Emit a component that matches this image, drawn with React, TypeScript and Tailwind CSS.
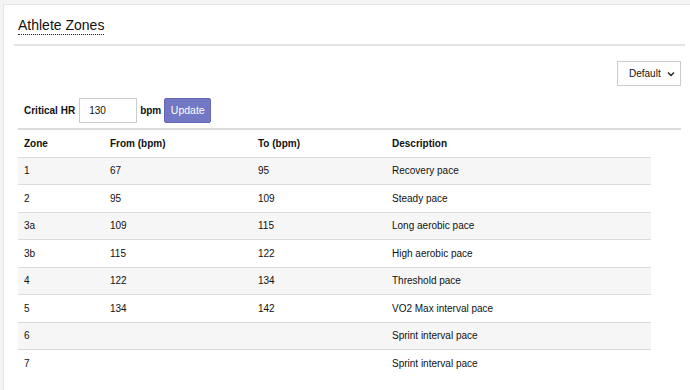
import React from "react";

const rows = [
  ["1", "67", "95", "Recovery pace"],
  ["2", "95", "109", "Steady pace"],
  ["3a", "109", "115", "Long aerobic pace"],
  ["3b", "115", "122", "High aerobic pace"],
  ["4", "122", "134", "Threshold pace"],
  ["5", "134", "142", "VO2 Max interval pace"],
  ["6", "", "", "Sprint interval pace"],
  ["7", "", "", "Sprint interval pace"],
];

export default function App() {
  return (
    <div
      className="w-[690px] h-[390px] overflow-hidden bg-[#f4f4f5] pt-[4px] pl-[3px]"
      style={{ fontFamily: '"Liberation Sans", Arial, sans-serif' }}
    >
      <div className="h-full bg-white border-l border-t border-[#e4e4e7] text-[#111]">
        <div className="pl-[10px] pr-[5px]">
          <div className="border-b-2 border-[#e3e5e8] pt-[8px] pb-[7px] pl-[4px]">
            <span className="text-[14px] leading-[18px] border-b border-dotted border-[#222] inline-block">
              Athlete Zones
            </span>
          </div>
        </div>
        <div className="flex justify-end pr-[9px] pt-[15px]">
          <div className="w-[64px] h-[25px] border border-[#ccc] flex items-center justify-between pl-[11px] pr-[5px] text-[10px]">
            <span>Default</span>
            <svg width="8" height="6" viewBox="0 0 8 6">
              <path d="M1 1.5 L4 4.5 L7 1.5" fill="none" stroke="#222" strokeWidth="1.4" />
            </svg>
          </div>
        </div>
        <div className="pl-[14px] pr-[9px] pt-[12px]">
          <div className="flex items-center h-[25px] pl-[6px] text-[10px]">
            <span className="font-bold">Critical HR</span>
            <div className="ml-[4px] w-[58px] h-[25px] border border-[#ccc] flex items-center pl-[9px]">130</div>
            <span className="font-bold ml-[3px]">bpm</span>
            <div className="ml-[3px] w-[47px] h-[25px] rounded-[2px] bg-[#7378c4] border border-[#6368b8] text-white text-[10.5px] flex items-center justify-center">
              Update
            </div>
          </div>
          <div className="mt-[5px] border-t-2 border-[#dcdcdc]">
            <table className="w-[633px] border-collapse text-[10px]">
              <thead>
                <tr className="h-[27px]">
                  <th className="text-left font-bold pl-[6px] w-[92px]">Zone</th>
                  <th className="text-left font-bold w-[148px]">From (bpm)</th>
                  <th className="text-left font-bold w-[134px]">To (bpm)</th>
                  <th className="text-left font-bold">Description</th>
                </tr>
              </thead>
              <tbody>
                {rows.map((r, i) => (
                  <tr
                    key={i}
                    className={`h-[27.5px] border-t border-[#dcdcdc] ${i % 2 === 0 ? "bg-[#f6f6f6]" : "bg-white"}`}
                  >
                    <td className="pl-[6px]">{r[0]}</td>
                    <td>{r[1]}</td>
                    <td>{r[2]}</td>
                    <td>{r[3]}</td>
                  </tr>
                ))}
              </tbody>
            </table>
          </div>
        </div>
      </div>
    </div>
  );
}
